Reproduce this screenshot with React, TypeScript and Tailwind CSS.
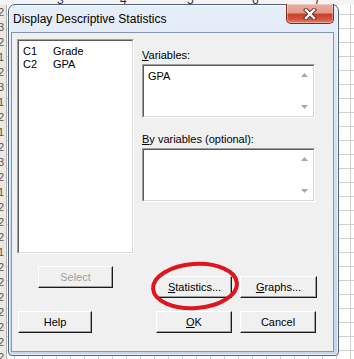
import type { ReactNode } from 'react'

const font = { fontFamily: '"Liberation Sans", Arial, sans-serif' }

function Btn({ children, disabled, className }: { children: ReactNode; disabled?: boolean; className?: string }) {
  return (
    <div
      className={`flex h-[22px] items-center justify-center border border-t-white border-l-white border-b-[#1a1a1a] border-r-[#1a1a1a] bg-[#f0f0f0] text-[11px] shadow-[inset_-1px_-1px_0_#a0a0a0] ${disabled ? 'text-[#a0a0a0]' : 'text-black'} ${className ?? ''}`}
    >
      {children}
    </div>
  )
}

function Arrows() {
  return (
    <div className="absolute right-[6px] top-[8px] bottom-[8px] flex flex-col justify-between">
      <svg width="7" height="4" viewBox="0 0 7 4">
        <path d="M0 4 L3.5 0 L7 4 Z" fill="#a8a8a8" />
      </svg>
      <svg width="7" height="4" viewBox="0 0 7 4">
        <path d="M0 0 L3.5 4 L7 0 Z" fill="#a8a8a8" />
      </svg>
    </div>
  )
}

function Sunken({ children, className }: { children?: ReactNode; className?: string }) {
  return (
    <div
      className={`relative border border-t-[#a0a0a0] border-l-[#a0a0a0] border-b-white border-r-white ${className ?? ''}`}
    >
      <div className="h-full w-full border border-t-[#5a5a5a] border-l-[#5a5a5a] border-b-[#d8d8d8] border-r-[#d8d8d8] bg-white">
        {children}
      </div>
    </div>
  )
}

export default function App() {
  const rows = ['2', '3', '2', '1', '2', '3', '1', '2', '1', '2', '3', '2', '1', '2', '2', '2', '1', '2', '2', '2', '2', '2', '2', '2', '2']
  return (
    <div
      className="relative h-[359px] w-[354px] overflow-hidden bg-white bg-[linear-gradient(#cfcfcf_1px,transparent_1px),linear-gradient(90deg,#cfcfcf_1px,transparent_1px)] bg-[length:14px_14px]"
      style={font}
    >
      {/* column header strip */}
      <div className="absolute left-0 top-0 flex h-[5px] w-full bg-[#f4f4f4] text-[12px] leading-none text-[#333]">
        <span className="absolute left-[57px] top-[-6px]">3</span>
        <span className="absolute left-[120px] top-[-6px]">4</span>
        <span className="absolute left-[187px] top-[-6px]">5</span>
        <span className="absolute left-[252px] top-[-6px]">6</span>
        <span className="absolute left-[314px] top-[-6px]">7</span>
      </div>
      {/* row header strip */}
      <div className="absolute left-0 top-[5px] flex w-[7px] flex-col overflow-hidden border-r border-[#b0b0b0] bg-[#ece9e2] text-[11px] leading-[15px] text-[#555]">
        {rows.map((r, i) => (
          <span key={i} className="-ml-[2px]">
            {r}
          </span>
        ))}
      </div>

      {/* dialog window */}
      <div className="absolute left-[8px] top-[4px] flex h-[352px] w-[331px] flex-col rounded-t-[7px] rounded-b-[4px] border border-[#52657c] bg-[linear-gradient(180deg,#e6eef8_0%,#d3e2f3_40%,#c2d7ee_100%)] shadow-[inset_0_0_0_1px_rgba(255,255,255,0.6)]">
        <div className="relative flex h-[27px] items-center pl-[4px] text-[12px] text-black">
          Display Descriptive Statistics
          <div className="absolute right-[4px] top-[-1px] flex h-[20px] w-[48px] items-center justify-center rounded-b-[5px] border border-t-0 border-[#7b2b22] bg-[linear-gradient(180deg,#eab0a3_0%,#e19a88_45%,#c7412b_55%,#d2563f_80%,#e3826a_100%)] shadow-[inset_0_0_0_1px_rgba(255,255,255,0.35)]">
            <svg width="14" height="12" viewBox="0 0 14 12">
              <path d="M3 2 L11 10 M11 2 L3 10" stroke="#5a2a22" strokeWidth="4.2" strokeLinecap="square" />
              <path d="M3 2 L11 10 M11 2 L3 10" stroke="#ffffff" strokeWidth="2.4" strokeLinecap="square" />
            </svg>
          </div>
        </div>

        <div className="ml-[2px] flex h-[320px] w-[323px] flex-col border border-[#8396ad] bg-[#f0f0f0] text-[11px] text-black">
          <div className="flex pl-[5px] pt-[6px]">
            <Sunken className="h-[215px] w-[117px]">
              <div className="pl-[4px] pt-[4px] leading-[13px]">
                <div className="flex">
                  <span className="w-[30px]">C1</span>
                  <span>Grade</span>
                </div>
                <div className="flex">
                  <span className="w-[30px]">C2</span>
                  <span>GPA</span>
                </div>
              </div>
            </Sunken>
            <div className="ml-[8px] flex w-[173px] flex-col pt-[10px]">
              <div className="leading-[13px]">
                <span className="underline">V</span>ariables:
              </div>
              <Sunken className="mt-[2px] h-[54px] w-[173px]">
                <div className="pl-[4px] pt-[4px] leading-[13px]">GPA</div>
                <Arrows />
              </Sunken>
              <div className="mt-[15px] leading-[13px]">
                <span className="underline">B</span>y variables (optional):
              </div>
              <Sunken className="mt-[2px] h-[54px] w-[173px]">
                <Arrows />
              </Sunken>
            </div>
          </div>

          <div className="mt-[12px] flex items-start pl-[26px]">
            <Btn disabled className="w-[75px]">
              Select
            </Btn>
            <div className="ml-[44px] mt-[10px] flex gap-[8px]">
              <Btn className="w-[75px]">
                <span className="underline">S</span>tatistics...
              </Btn>
              <Btn className="w-[77px]">
                <span className="underline">G</span>raphs...
              </Btn>
            </div>
          </div>

          <div className="mt-[13px] flex pl-[6px]">
            <Btn className="w-[74px]">Help</Btn>
            <Btn className="ml-[64px] w-[76px]">
              <span className="underline">O</span>K
            </Btn>
            <Btn className="ml-[8px] w-[76px]">Cancel</Btn>
          </div>
        </div>
      </div>

      {/* red annotation circle */}
      <svg className="pointer-events-none absolute left-0 top-0" width="354" height="359" viewBox="0 0 354 359">
        <ellipse cx="195" cy="286" rx="42" ry="22" transform="rotate(-4 195 286)" fill="none" stroke="#e0141c" strokeWidth="4" />
      </svg>
    </div>
  )
}
